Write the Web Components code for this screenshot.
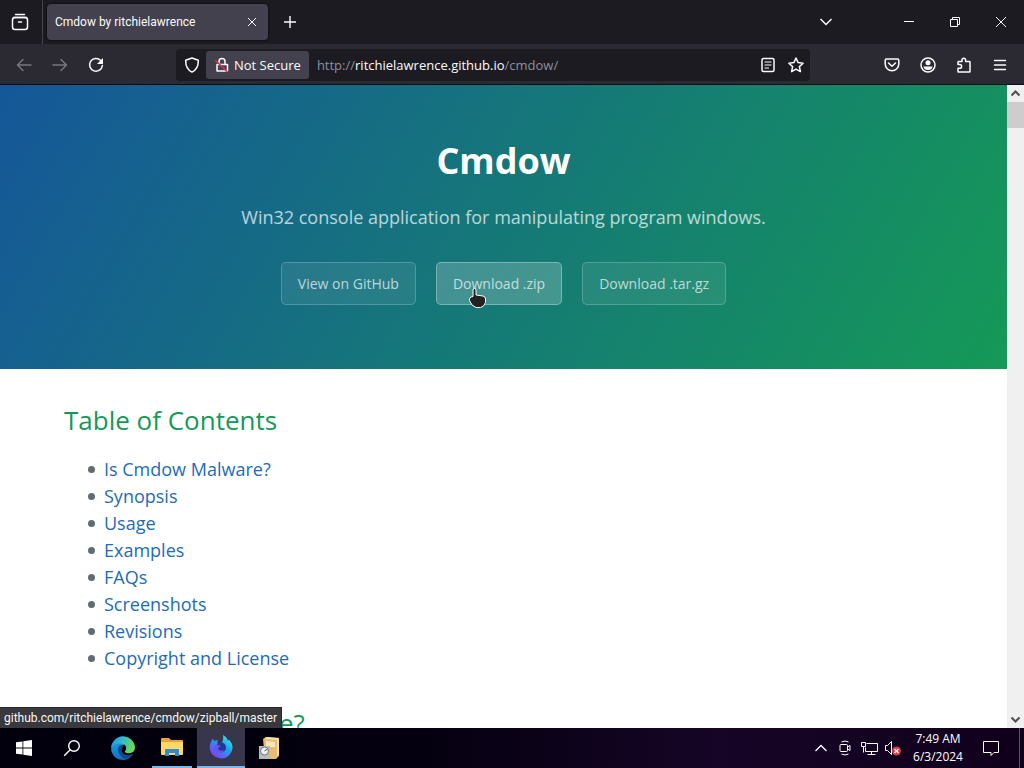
<!DOCTYPE html>
<html lang="en">
<head>
<meta charset="utf-8">
<title>Cmdow by ritchielawrence</title>
<style>
html, body { margin: 0; height: 100%; }
body { font-family: "Open Sans", "Noto Sans", sans-serif; }
</style>
</head>
<body>
<desktop-screen></desktop-screen>

<script>
const define = (name, html) => {
  const template = document.createElement('template');
  template.innerHTML = `<style>*{box-sizing:border-box}</style>${html}`;
  customElements.define(name, class extends HTMLElement {
    constructor() {
      super();
      this.attachShadow({ mode: 'open' }).append(template.content.cloneNode(true));
    }
  });
};

/* A borderless button that holds one icon. */
define('icon-button', `
<style>
:host { display: block; flex: none; width: 36px; height: 32px; }
button { display: grid; place-items: center; width: 100%; height: 100%; padding: 0; border: 0; background: none; color: inherit; }
</style>
<button><slot></slot></button>`);

define('tab-strip', `
<style>
:host { display: flex; align-items: center; height: 44px; background: #1c1b22; color: #fbfbfe; }
svg { display: block; fill: none; stroke: currentColor; }
.view { width: 43px; height: 44px; border-right: 1px solid #42414d; padding-right: 2px; }
.tab { display: flex; align-items: center; width: 221px; height: 36px; margin-left: 4px; padding-left: 8px; border-radius: 4px; background: #42414d; font-family: Roboto, sans-serif; font-size: 12px; box-shadow: 0 0 3px #000; }
.title { flex: 1; white-space: nowrap; }
.tab icon-button { width: 32px; }
.new { margin-left: 4px; }
.space { flex: 1; }
.list { margin-right: 42px; }
.win { width: 46px; }
</style>
<icon-button class="view"><svg width="18" height="18" viewBox="0 0 18 18" stroke-width="1.5" stroke-linecap="round"><path d="M4.5 1.5h9M2.5 4.5h13"/><rect x="1.5" y="4.5" width="15" height="12" rx="2.5"/><path d="M7.500 9h3"/></svg></icon-button>
<div class="tab"><span class="title">Cmdow by ritchielawrence</span><icon-button><svg width="10" height="10" viewBox="0 0 10 10"><path d="M1 1l8 8M9 1l-8 8"/></svg></icon-button></div>
<icon-button class="new"><svg width="14" height="14" viewBox="0 0 14 14" stroke-width="1.4"><path d="M7 1v12M1 7h12"/></svg></icon-button>
<span class="space"></span>
<icon-button class="list"><svg width="14" height="14" viewBox="0 0 14 14" stroke-width="1.5"><path d="M1.5 4l5.500 5.500L12.500 4"/></svg></icon-button>
<icon-button class="win"><svg width="12" height="12" viewBox="0 0 12 12"><path d="M1 5.500h10"/></svg></icon-button>
<icon-button class="win"><svg width="12" height="12" viewBox="0 0 12 12"><path d="M1.500 3.500h7v7h-7zM3.500 3.500v-2h7v7h-2"/></svg></icon-button>
<icon-button class="win"><svg width="12" height="12" viewBox="0 0 12 12"><path d="M1 1l10 10M11 1L1 11"/></svg></icon-button>`);

define('nav-bar', `
<style>
:host { display: flex; align-items: center; height: 41px; padding: 1px 6px 0; box-sizing: border-box; background: #2b2a33; color: #fbfbfe; border-bottom: 1px solid #0c0c0d; }
svg { display: block; fill: none; stroke: currentColor; stroke-width: 1.5; stroke-linecap: round; stroke-linejoin: round; }
.off { color: #77767e; }
.address { display: flex; align-items: center; flex: 1; height: 32px; margin: 0 64px 0 62px; border-radius: 4px; background: #1c1b22; }
.address icon-button { width: 28px; }
.shield { margin-left: 2px; }
.secure { display: flex; align-items: center; gap: 4px; height: 28px; padding: 0 8px; border: 0; border-radius: 3px; background: #42414d; color: inherit; font: 13px/20px "Open Sans", sans-serif; white-space: nowrap; }
.url { flex: 1; margin-left: 8px; font-size: 13px; line-height: 20px; color: #8f8f9a; }
.url b { font-weight: 400; color: #fbfbfe; }
</style>
<icon-button class="off"><svg width="16" height="16" viewBox="0 0 16 16"><path d="M15 8H1.500M7 2.500L1.500 8 7 13.500"/></svg></icon-button>
<icon-button class="off"><svg width="16" height="16" viewBox="0 0 16 16"><path d="M1 8h13.500M9 2.500L14.500 8 9 13.500"/></svg></icon-button>
<icon-button><svg width="16" height="16" viewBox="0 0 16 16"><path d="M12.500 3.200A6.400 6.400 0 1 0 14.400 8.500"/><path d="M15 1v6h-6z" fill="currentColor" stroke="none"/></svg></icon-button>
<div class="address">
  <icon-button class="shield"><svg width="16" height="16" viewBox="0 0 16 16"><path d="M8 1L14.300 3.300C14.500 9 12.500 13 8 15.200 3.500 13 1.500 9 1.700 3.300z"/></svg></icon-button>
  <button class="secure"><svg width="16" height="16" viewBox="0 0 16 16"><path d="M5 7V4.500a3 3 0 0 1 6 0V7M3 7.500h10.500v6.500H3z"/><path d="M1.500 3.500L13 14.500" stroke="#e22850" stroke-width="1.500"/></svg><span>Not Secure</span></button>
  <span class="url">http://<b>ritchielawrence.github.io</b>/cmdow/</span>
  <icon-button><svg width="16" height="16" viewBox="0 0 16 16"><rect x="2" y="1.500" width="12" height="13" rx="1.500"/><path d="M5 5h6M5 8h6M5 11h3.500" stroke-width="1.200"/></svg></icon-button>
  <icon-button><svg width="16" height="16" viewBox="0 0 16 16"><path d="M8 1l2.100 4.600 5 .6-3.700 3.400 1 5L8 12.100l-4.400 2.500 1-5L.900 6.200l5-.6z"/></svg></icon-button>
</div>
<icon-button><svg width="16" height="16" viewBox="0 0 16 16"><path d="M2.500 2h11q1.300 0 1.300 1.300V7a6.800 6.800 0 0 1-13.600 0V3.300Q1.200 2 2.500 2zM4.500 6L8 9.300 11.500 6"/></svg></icon-button>
<icon-button><svg width="16" height="16" viewBox="0 0 16 16"><circle cx="8" cy="8" r="7"/><circle cx="8" cy="5.700" r="2.500" fill="currentColor" stroke="none"/><path d="M3.500 9.500h9Q12 13 8 13t-4.500-3.500z" fill="currentColor" stroke="none"/></svg></icon-button>
<icon-button><svg width="16" height="16" viewBox="0 0 16 16"><path d="M2 7V5.200q0-.7.700-.7H6V3a1.800 1.800 0 0 1 3.600 0v1.500h3.700q.7 0 .7.700v9.200q0 .6-.7.600H2.700q-.7 0-.7-.6V11.200h1.800a1.800 1.800 0 0 0 0-3.600H2"/></svg></icon-button>
<icon-button><svg width="14" height="14" viewBox="0 0 14 14"><path d="M1.500 2.500h11M1.500 7h11M1.500 11.500h11"/></svg></icon-button>`);

define('hero-link', `
<style>
:host { display: block; position: relative; }
a { display: block; padding: 10px 16px; border: 1px solid rgba(255,255,255,.2); border-radius: 5px; background: rgba(255,255,255,.08); color: rgba(255,255,255,.7); font-size: 14px; line-height: 21px; text-decoration: none; white-space: nowrap; }
:host([active]) a { background: rgba(255,255,255,.2); border-color: rgba(255,255,255,.3); }
</style>
<a href="#"><slot></slot></a><slot name="pointer"></slot>`);

define('page-hero', `
<style>
:host { display: flex; flex-direction: column; align-items: center; padding: 48px 64px 64px; background: linear-gradient(120deg, #155799, #159957); color: #fff; text-align: center; }
h1 { margin: 0 0 15px; font-size: 36px; line-height: 56px; font-weight: 700; }
p { margin: 0 0 31px; font-size: 18px; line-height: 27px; opacity: .7; }
nav { display: flex; gap: 20px; }
.pointer { position: absolute; left: 32px; top: 26px; display: block; }
</style>
<h1>Cmdow</h1>
<p>Win32 console application for manipulating program windows.</p>
<nav>
  <hero-link>View on GitHub</hero-link>
  <hero-link active>Download .zip<svg slot="pointer" class="pointer" width="20" height="20" viewBox="0 0 20 20"><path d="M5 2q0-1.500 1.500-1.500T8 2v5l7 1q2.500.5 2.500 3v3.500l-2 3.500-3 1.500H8L4 17 1.500 12.500Q1 9.500 3 9l2-.5z" fill="#222" stroke="#fff"/></svg></hero-link>
  <hero-link>Download .tar.gz</hero-link>
</nav>`);

define('page-contents', `
<style>
:host { display: block; padding: 32px 64px; background: #fff; color: #606c71; font-size: 18px; line-height: 27px; }
h2 { margin: 0 0 16px; color: #159957; font-size: 26px; line-height: 39px; font-weight: 400; }
ul { margin: 0 0 32px; padding-left: 24px; list-style: none; }
li { display: flex; align-items: center; gap: 9px; }
li::before { content: ""; width: 7px; height: 7px; border-radius: 50%; background: #606c71; }
a { color: #1e6bb8; text-decoration: none; }
</style>
<h2>Table of Contents</h2>
<ul>
  <li><a href="#malware">Is Cmdow Malware?</a></li>
  <li><a href="#synopsis">Synopsis</a></li>
  <li><a href="#usage">Usage</a></li>
  <li><a href="#examples">Examples</a></li>
  <li><a href="#faqs">FAQs</a></li>
  <li><a href="#screenshots">Screenshots</a></li>
  <li><a href="#revisions">Revisions</a></li>
  <li><a href="#license">Copyright and License</a></li>
</ul>
<h2 id="malware">Is Cmdow Malware?</h2>`);

define('scroll-bar', `
<style>
:host { display: flex; flex-direction: column; flex: none; width: 17px; background: #f0f0f0; color: #505050; }
icon-button { width: 17px; height: 17px; }
.track { flex: 1; }
.thumb { height: 26px; background: #cdcdcd; }
svg { fill: none; stroke: currentColor; stroke-width: 2; }
</style>
<icon-button><svg width="9" height="9" viewBox="0 0 9 9"><path d="M.500 6.500l4-4 4 4"/></svg></icon-button>
<div class="track"><div class="thumb"></div></div>
<icon-button><svg width="9" height="9" viewBox="0 0 9 9"><path d="M.500 2.500l4 4 4-4"/></svg></icon-button>`);

define('page-view', `
<style>
:host { position: relative; display: flex; flex: 1; min-height: 0; overflow: hidden; }
main { flex: 1; min-width: 0; overflow: hidden; background: #fff; }
.status { position: absolute; left: 0; bottom: 0; height: 21px; padding: 0 4px; border: 1px solid #2b2a33; border-left: 0; border-bottom: 0; background: #38383d; color: #f9f9fa; font-family: Roboto, sans-serif; font-size: 12px; line-height: 20px; white-space: nowrap; }
</style>
<main><page-hero></page-hero><page-contents></page-contents></main>
<scroll-bar></scroll-bar>
<div class="status">github.com/ritchielawrence/cmdow/zipball/master</div>`);

define('task-bar', `
<style>
:host { display: flex; align-items: stretch; height: 40px; background: linear-gradient(90deg, #02000c 0, #04000f 40%, #160526 70%, #10001c 100%); color: #fff; }
svg { display: block; fill: none; stroke: currentColor; }
.solid { stroke: none; }
.app { width: 48px; height: 40px; }
.edge { margin: 0 5px 0 3px; }
.files { width: 40px; border-bottom: 2px solid #76b9ed; margin-right: 5px; }
.firefox { background: #38364a; border-bottom: 2px solid #76b9ed; }
.space { flex: 1; }
.tray { width: 24px; height: 40px; }
.clock { width: 66px; font-size: 12px; line-height: 18px; padding-top: 2px; text-align: center; white-space: nowrap; }
.note { width: 40px; height: 40px; }
.show { width: 9px; border-right: 1px solid #55505f; }
.end { width: 4px; }
</style>
<icon-button class="app"><svg width="16" height="16" viewBox="0 0 16 16"><path d="M0 2.300L6.500 1.400v6.200H0zM7.300 1.300L16 0v7.600H7.300zM0 8.400h6.500v6.200L0 13.700zM7.300 8.400H16V16l-8.700-1.300z" fill="#fff" stroke="none"/></svg></icon-button>
<icon-button class="app"><svg width="18" height="18" viewBox="0 0 18 18" stroke-width="1.400"><circle cx="11" cy="7" r="5.300"/><path d="M7.200 10.800L1.200 16.800"/></svg></icon-button>
<icon-button class="app edge"><svg class="solid" width="24" height="24" viewBox="0 0 24 24"><defs><linearGradient id="a" x2="1" y2=".3"><stop stop-color="#1f8fdc"/><stop offset=".5" stop-color="#2fbcd0"/><stop offset="1" stop-color="#66d955"/></linearGradient><linearGradient id="c" x2=".6" y2="1"><stop stop-color="#1b9de2"/><stop offset="1" stop-color="#1467bd"/></linearGradient></defs><path d="M.2 10.500Q2 6 8 6q4 0 5 3-5 0-4.500 5 1 5.500 7 6 4 .2 6.500-2Q19 23.500 12.500 24 3 24 .3 15z" fill="url(#c)"/><path d="M8.500 9.500q-3 5 0 9 2.500 3.500 6 4.500 4.500-1 7.500-5-5 2.300-9 0-4-3-1-8z" fill="#114a8b"/><path d="M.1 11.500A12 12 0 0 1 24 11q.2 6-6 6.200-4 0-4.300-1.800 1.600-1.200 1.500-3.400Q14.800 7.500 9 7.500 3 7.500 .1 11.500z" fill="url(#a)"/></svg></icon-button>
<icon-button class="app files"><svg class="solid" width="22" height="20" viewBox="0 0 22 20"><path d="M0 2q0-1 1-1h7l2 2h11q1 0 1 1v13H0z" fill="#e8a33d"/><path d="M0 5h22v12q0 1-1 1H1q-1 0-1-1z" fill="#ffd766"/><path d="M4 19v-6q0-1 1-1h12q1 0 1 1v6h-4v-3H8v3z" fill="#2f8bd0"/></svg></icon-button>
<icon-button class="app firefox"><svg class="solid" width="24" height="24" viewBox="0 0 24 24"><defs><linearGradient id="b" x1="1" x2=".2" y2="1"><stop stop-color="#5df5e0"/><stop offset=".45" stop-color="#18a7f2"/><stop offset="1" stop-color="#8b35ef"/></linearGradient></defs><path d="M14 0q4 2 5 6l1-1.500q4 4.500 3.500 9A11.500 11.500 0 0 1 1 15Q0 8 4 3.500L5 6l4-1-1 3 3 2q4-4 3-10z" fill="url(#b)"/><circle cx="12" cy="12.500" r="5" fill="#27368f"/><path d="M5 11q3-2 7 0-3 1-3 3 2 3 6 1-2 4-6 3-4-1.500-4-7z" fill="#6a52ef"/></svg></icon-button>
<icon-button class="app"><svg class="solid" width="22" height="24" viewBox="0 0 22 24"><path d="M5 3l3-2 13 1v18l-3 3H7z" fill="#e9bd71"/><path d="M8 1l13 1v16l-2 2V4L7 3z" fill="#f8dfa6"/><path d="M8 5l9 1v5H8z" fill="#f6e5bf"/><path d="M1 10h11v13H1z" fill="#b9bcb9"/><circle cx="6.500" cy="15" r="4" fill="#edf0f0" stroke="#777"/><path d="M6.500 15l3-2" stroke="#555"/></svg></icon-button>
<span class="space"></span>
<icon-button class="tray"><svg width="14" height="14" viewBox="0 0 14 14" stroke-width="1.300"><path d="M1.500 10L7 4.500l5.500 5.500"/></svg></icon-button>
<icon-button class="tray"><svg width="14" height="16" viewBox="0 0 14 16"><rect x="2" y="4.500" width="7.500" height="7" rx="1"/><path d="M9.500 7L12 5.500v5L9.500 9M3.500 2Q7 0 10.500 2M3.500 14q3.500 2 7 0"/></svg></icon-button>
<icon-button class="tray"><svg width="17" height="16" viewBox="0 0 17 16"><path d="M5.500 3.500h11v8h-12v-4M10.500 11.500v3M6.500 14.500h8M.500 2.500h4v4h-4zM2.500 6.500v6"/></svg></icon-button>
<icon-button class="tray"><svg width="18" height="16" viewBox="0 0 18 16"><path d="M1.500 5.500h2l4-4v13l-4-4h-2z"/><circle cx="12.500" cy="11" r="4.500" fill="#d83b43" stroke="none"/><path d="M10.500 9l4 4M14.500 9l-4 4" stroke="#fff" stroke-width="1.300"/></svg></icon-button>
<div class="clock">7:49 AM<br>6/3/2024</div>
<icon-button class="note"><svg width="18" height="18" viewBox="0 0 18 18"><path d="M1.500 2.500h15v11H12l-3 3v-3H1.500z"/></svg></icon-button>
<span class="show"></span><span class="end"></span>`);

define('desktop-screen', `
<style>
:host { display: flex; flex-direction: column; height: 100vh; overflow: hidden; }
</style>
<tab-strip></tab-strip>
<nav-bar></nav-bar>
<page-view></page-view>
<task-bar></task-bar>`);
</script>
</body>
</html>
